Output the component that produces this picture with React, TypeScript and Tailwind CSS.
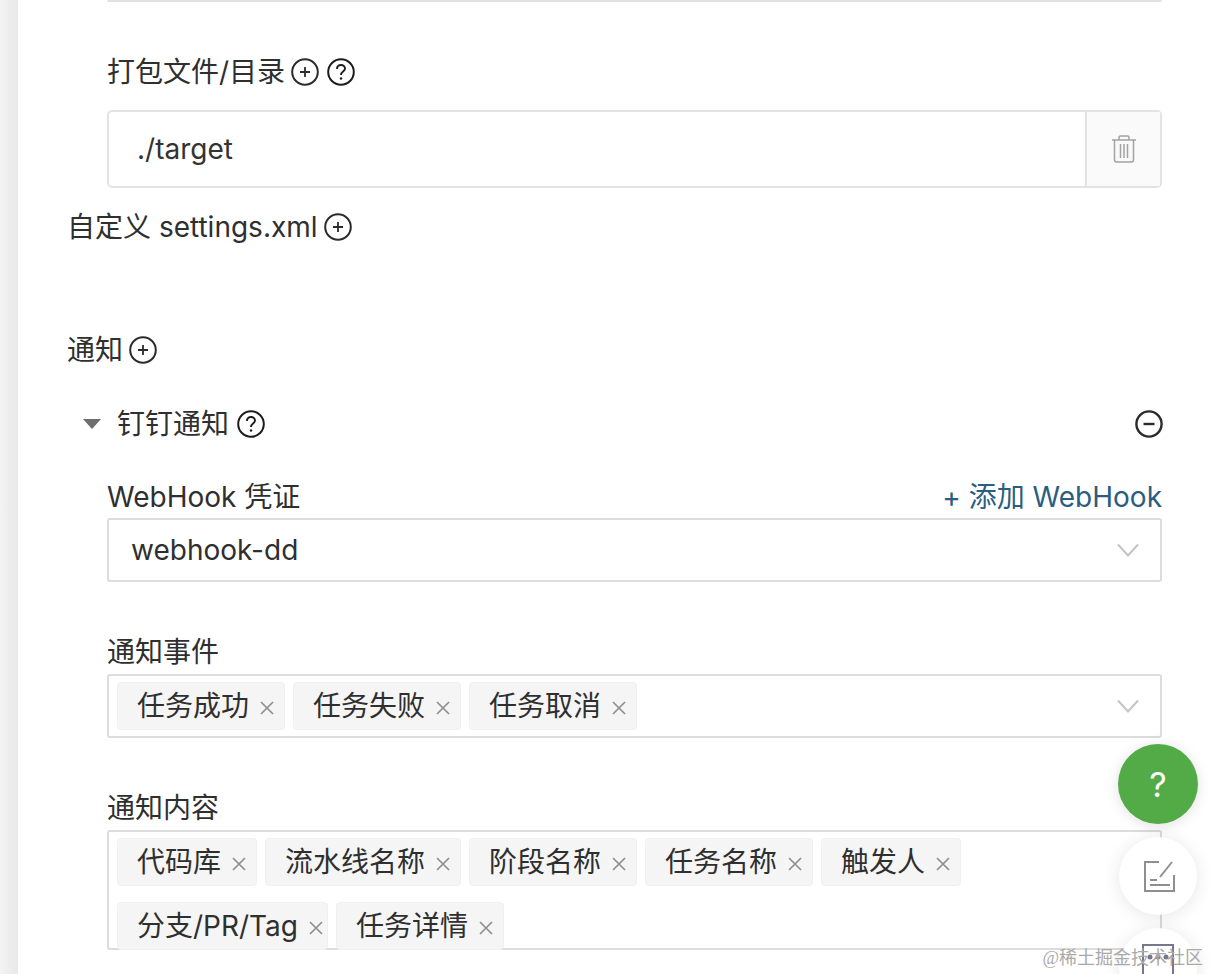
const FONT = "font-['Inter','Noto_Sans_CJK_SC',sans-serif]";

function PlusIcon({ className = "" }: { className?: string }) {
  return (
    <svg viewBox="0 0 28 28" className={`w-7 h-7 shrink-0 ${className}`} fill="none" stroke="#2b2b2b">
      <circle cx="14" cy="14" r="12.8" strokeWidth="2" />
      <path d="M14 9v10M9 14h10" strokeWidth="1.8" />
    </svg>
  );
}

function MinusIcon() {
  return (
    <svg viewBox="0 0 28 28" className="w-7 h-7 shrink-0" fill="none" stroke="#2b2b2b">
      <circle cx="14" cy="14" r="12.6" strokeWidth="2.4" />
      <path d="M8.5 14h11" strokeWidth="2.4" />
    </svg>
  );
}

function HelpIcon() {
  return (
    <svg viewBox="0 0 28 28" className="w-7 h-7 shrink-0" fill="none" stroke="#1c1c1c">
      <circle cx="14" cy="14" r="12.8" strokeWidth="2" />
      <path d="M10 11c0-2.6 1.800-4 4-4s4 1.500 4 3.600c0 3-4 3-4 6.400" strokeWidth="1.900" />
      <circle cx="14" cy="20.500" r="1.200" fill="#1c1c1c" stroke="none" />
    </svg>
  );
}

function Chevron() {
  return (
    <svg viewBox="0 0 22 14" className="w-[22px] h-[14px]" fill="none" stroke="#c4c4c4" strokeWidth="2">
      <path d="M1 1.500l10 11 10-11" />
    </svg>
  );
}

function Tag({ label, width }: { label: string; width: string }) {
  return (
    <div className={`h-12 ${width} flex items-center pl-[19px] rounded-[4px] bg-[#f5f5f5] border border-[#f0f0f0] text-[#2f2f2f]`}>
      <span className="whitespace-nowrap">{label}</span>
      <svg viewBox="0 0 14 14" className="w-3.5 h-3.5 ml-[11px] mt-1 shrink-0" fill="none" stroke="#8f8f8f" strokeWidth="1.700">
        <path d="M1 1l12 12M13 1L1 13" />
      </svg>
    </div>
  );
}

function Label({ children }: { children: React.ReactNode }) {
  return <div className="h-9 flex items-center gap-2 leading-none text-[#2f2f2f]">{children}</div>;
}

export default function App() {
  return (
    <div className={`relative w-[1210px] h-[974px] overflow-hidden bg-white flex text-[28px] text-[#2f2f2f] ${FONT}`}>
      <div className="w-[18px] h-full shrink-0 bg-gradient-to-r from-[#f3f3f3] to-[#e9e9e9]" />

      <main className="w-[1144px] pl-[49px] flex flex-col">
        {/* bottom edge of the previous input */}
        <div className="ml-10 h-[2px] rounded-b bg-[#e2e2e2]" />

        <div className="ml-10 mt-[52px]">
          <Label>
            <span>打包文件/目录</span>
            <PlusIcon className="-ml-0.5" />
            <HelpIcon />
          </Label>
        </div>
        <div className="ml-10 mt-[20px] h-[78px] flex rounded-[5px] border-2 border-[#e3e3e3]">
          <div className="flex-1 flex items-center pl-[28px] text-[#333]">./target</div>
          <div className="w-[75px] flex items-center justify-center bg-[#fafafa] border-l-2 border-[#e3e3e3]">
            <svg viewBox="0 0 26 28" className="w-[26px] h-7" fill="none" stroke="#a3a3a3" strokeWidth="1.500">
              <path d="M1 5h24M8 5V2.500C8 1.600 8.700 1 9.500 1h7c.8 0 1.500.6 1.500 1.500V5" />
              <path d="M3.500 5v20c0 1.200.8 2 2 2h15c1.200 0 2-.8 2-2V5" />
              <path d="M9.500 9v14M13 9v14M16.500 9v14" />
            </svg>
          </div>
        </div>

        <div className="mt-[21px]">
          <Label>
            <span>自定义 settings.xml</span>
            <PlusIcon className="-ml-0.5" />
          </Label>
        </div>

        <div className="mt-[87px]">
          <Label>
            <span>通知</span>
            <PlusIcon className="-ml-0.5" />
          </Label>
        </div>

        <div className="mt-[38px] h-9 flex items-center">
          <svg viewBox="0 0 18 10" className="ml-4 w-[18px] h-2.5 shrink-0" fill="#6e6e6e">
            <path d="M0 0h18L9 10z" />
          </svg>
          <span className="ml-4 leading-none">钉钉通知</span>
          <span className="ml-2"><HelpIcon /></span>
          <span className="ml-auto -mr-px"><MinusIcon /></span>
        </div>

        <section className="ml-10 mt-[37px]">
          <div className="h-9 flex items-center justify-between">
            <span>WebHook 凭证</span>
            <span className="text-[#2b5d80]">+ 添加 WebHook</span>
          </div>
          <div className="mt-[3px] h-16 flex items-center justify-between pl-[22px] pr-[21px] rounded-[3px] border-2 border-[#dcdcdc]">
            <span>webhook-dd</span>
            <Chevron />
          </div>

          <div className="mt-[52px] h-9 flex items-center">通知事件</div>
          <div className="mt-1 h-16 flex items-center gap-2 pl-2 pr-[21px] rounded-[3px] border-2 border-[#dcdcdc]">
            <Tag label="任务成功" width="w-[168px]" />
            <Tag label="任务失败" width="w-[168px]" />
            <Tag label="任务取消" width="w-[168px]" />
            <span className="ml-auto"><Chevron /></span>
          </div>

          <div className="mt-[52px] h-9 flex items-center">通知内容</div>
          <div className="mt-1 h-[120px] flex flex-wrap content-start gap-2 pl-2 pt-1.5 rounded-[3px] border-2 border-[#dcdcdc]">
            <Tag label="代码库" width="w-[140px]" />
            <Tag label="流水线名称" width="w-[196px]" />
            <Tag label="阶段名称" width="w-[168px]" />
            <Tag label="任务名称" width="w-[168px]" />
            <Tag label="触发人" width="w-[140px]" />
            <div className="w-full h-0 -mt-2" />
            <Tag label="分支/PR/Tag" width="w-[211px]" />
            <Tag label="任务详情" width="w-[168px]" />
          </div>
        </section>
      </main>

      {/* floating buttons */}
      <div className="absolute left-[1118px] top-[744px] w-20 h-20 rounded-full bg-[#52ab46] shadow-[0_2px_14px_rgba(0,0,0,0.12)] flex items-center justify-center text-[34px] text-white">
        ?
      </div>
      <div className="absolute left-[1119px] top-[837px] w-[78px] h-[78px] rounded-full bg-white shadow-[0_2px_18px_rgba(0,0,0,0.1)] flex items-center justify-center">
        <svg viewBox="0 0 32 32" className="w-8 h-8 ml-0.5" fill="none" stroke="#8f8f93" strokeWidth="2">
          <path d="M16 2H2v29h29V15M7 20h7M7 25h20M17 17L29 2" />
        </svg>
      </div>
      <div className="absolute left-[1119px] top-[928px] w-[78px] h-[78px] rounded-full bg-white shadow-[0_2px_18px_rgba(0,0,0,0.1)] flex justify-center">
        <svg viewBox="0 0 32 32" className="w-8 h-8 mt-[16px]" fill="none" stroke="#77778c" strokeWidth="2">
          <path d="M1 31V1h30v30" />
          <circle cx="8" cy="13" r="1.500" fill="#77778c" />
          <circle cx="16" cy="13" r="1.500" fill="#77778c" />
          <circle cx="24" cy="13" r="1.500" fill="#77778c" />
        </svg>
      </div>

      {/* watermark */}
      <div className="absolute right-[7px] top-[946px] text-[18px] leading-6 whitespace-nowrap text-[#a9a9a9] font-['Liberation_Serif','Noto_Sans_CJK_SC',serif]">
        @稀土掘金技术社区
      </div>
    </div>
  );
}
